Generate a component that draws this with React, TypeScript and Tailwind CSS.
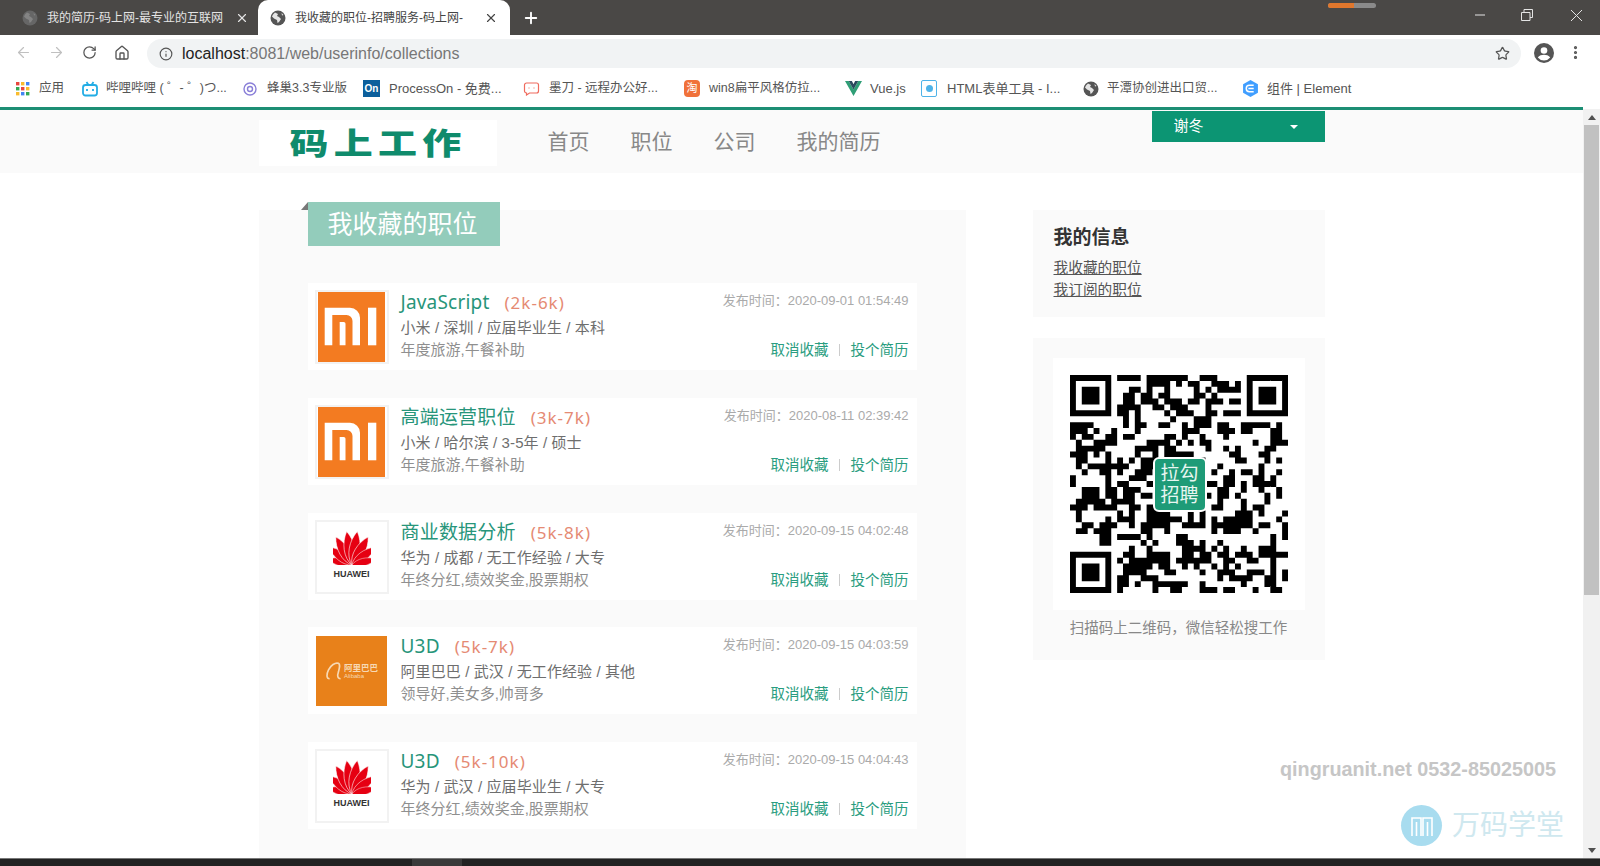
import React from "react";
import { ArrowLeft, ArrowRight, RotateCw, Home, Info, Star, X, Plus, EllipsisVertical } from "lucide-react";

const cjk = "font-['Liberation_Sans','Noto_Sans_CJK_SC',sans-serif]";

function Globe({ className, land = "#fff" }: { className: string; land?: string }) {
  return (
    <svg viewBox="0 0 16 16" className={className}>
      <circle cx="8" cy="8" r="7.5" fill="currentColor" />
      <path d="M5 2.5l3 1.5-1 2 2 1 2 2-2 3-1.5 1-.5-3-3-1.5-2-2 1-2z M11.500 3l2 2-1.500.5z" fill={land} opacity=".85" />
    </svg>
  );
}

function Tab({ title, active }: { title: string; active?: boolean }) {
  return (
    <div className={`flex items-center h-[35px] shrink-0 ${active ? "w-[252px] pl-[12px] pr-[12px] bg-white rounded-t-[10px] text-[#444]" : "w-[250px] pl-[14px] pr-[9px] text-[#e4e4e4]"}`}>
      <Globe className={`w-[16px] h-[16px] shrink-0 ${active ? "text-[#555]" : "text-[#666]"}`} land={active ? "#fff" : "#8a8a8a"} />
      <span className="ml-[9px] flex-1 overflow-hidden whitespace-nowrap text-[12px]">{title}</span>
      <X className="w-[14px] h-[14px] ml-[5px] shrink-0" strokeWidth={2} />
    </div>
  );
}

function Bookmark({ icon, label, cls }: { icon: React.ReactNode; label: string; cls: string }) {
  return (
    <div className={`flex items-center shrink-0 text-[#555] whitespace-nowrap ${cls}`}>
      {icon}
      <span>{label}</span>
    </div>
  );
}

function MiLogo() {
  return (
    <svg viewBox="0 0 67 70" className="w-[67px] h-[70px]">
      <rect width="67" height="70" fill="#f37b21" />
      <path d="M6.700 15.700H32a10 10 0 0 1 10 10V53.300H34.500V29a6 6 0 0 0-6-6H14.300V53.300H6.700z" fill="#fff" />
      <path d="M21.700 30h4a1.800 1.800 0 0 1 1.800 1.800V53.300h-5.800z" fill="#fff" />
      <rect x="50" y="15.700" width="8.300" height="37.600" fill="#fff" />
    </svg>
  );
}

function HuaweiLogo() {
  const petals: [number, number][] = [[-76, 0.72], [-52, 0.85], [-30, 0.95], [-9, 1], [9, 1], [30, 0.95], [52, 0.85], [76, 0.72]];
  return (
    <div className="flex flex-col items-center -mt-[4px]">
      <svg viewBox="0 0 40 36" className="w-[38px] h-[34px]">
        {petals.map(([a, s], i) => (
          <path key={i} d="M20 36C12 27 13 11 20 0C27 11 28 27 20 36z" fill="#e60012" transform={`rotate(${a} 20 36) translate(20 36) scale(${s}) translate(-20 -36)`} stroke="#fff" strokeWidth=".6" />
        ))}
      </svg>
      <span className="font-['Liberation_Sans',sans-serif] font-bold text-[9px] leading-[10px] text-[#333] mt-[4px]">HUAWEI</span>
    </div>
  );
}

function AliLogo() {
  return (
    <div className="w-[71px] h-[70px] bg-[#e8811a] flex items-center justify-center text-[#f7d9b4]">
      <svg viewBox="0 0 16 20" className="w-[18px] h-[22px]" fill="none" stroke="currentColor" strokeWidth="1.500">
        <path d="M4 17C1 17 1 13 3 9c2-4 6-7 9-6 2 1 1 4 0 8-1 3-1 6 2 6" />
      </svg>
      <div className="flex flex-col ml-[1px]">
        <span className="text-[8.5px] leading-[10px] font-bold">阿里巴巴</span>
        <span className="font-['Liberation_Sans',sans-serif] text-[6px] leading-[7px]">Alibaba</span>
      </div>
    </div>
  );
}

type Job = { title: string; salary: string; info: string; welfare: string; time: string; logo: "mi" | "hw" | "ali" };
const jobs: Job[] = [
  { title: "JavaScript", salary: "(2k-6k)", info: "小米 / 深圳 / 应届毕业生 / 本科", welfare: "年度旅游,午餐补助", time: "2020-09-01 01:54:49", logo: "mi" },
  { title: "高端运营职位", salary: "(3k-7k)", info: "小米 / 哈尔滨 / 3-5年 / 硕士", welfare: "年度旅游,午餐补助", time: "2020-08-11 02:39:42", logo: "mi" },
  { title: "商业数据分析", salary: "(5k-8k)", info: "华为 / 成都 / 无工作经验 / 大专", welfare: "年终分红,绩效奖金,股票期权", time: "2020-09-15 04:02:48", logo: "hw" },
  { title: "U3D", salary: "(5k-7k)", info: "阿里巴巴 / 武汉 / 无工作经验 / 其他", welfare: "领导好,美女多,帅哥多", time: "2020-09-15 04:03:59", logo: "ali" },
  { title: "U3D", salary: "(5k-10k)", info: "华为 / 武汉 / 应届毕业生 / 大专", welfare: "年终分红,绩效奖金,股票期权", time: "2020-09-15 04:04:43", logo: "hw" },
];

function JobCard({ job }: { job: Job }) {
  return (
    <div className="flex h-[87px] w-[609px] bg-white pl-[7px] pr-[8px] pt-[7px]">
      <div className={`w-[74px] h-[74px] shrink-0 flex items-center justify-center ${job.logo === "ali" ? "" : "border-2 border-[#f2f2f2]"}`}>
        {job.logo === "mi" && <MiLogo />}
        {job.logo === "hw" && <HuaweiLogo />}
        {job.logo === "ali" && <AliLogo />}
      </div>
      <div className="ml-[12px] flex-1 min-w-0">
        <div className="flex items-start justify-between h-[26px]">
          <div className="flex items-baseline leading-[24px]">
            <span className="text-[19px] tracking-[0.2px] text-[#27957a] font-['Noto_Sans','Noto_Sans_CJK_SC',sans-serif]">{job.title}</span>
            <span className="text-[17px] text-[#e58a73] ml-[15px] tracking-[1px] font-['Noto_Sans',sans-serif]">{job.salary}</span>
          </div>
          <span className="text-[13px] text-[#aaa] leading-[22px]">发布时间：{job.time}</span>
        </div>
        <div className="text-[15px] text-[#6e6e6e] leading-[22px] mt-[1px] whitespace-nowrap tracking-[0.1px]">{job.info}</div>
        <div className="flex items-center justify-between leading-[22px]">
          <span className="text-[15px] text-[#8f8f8f]">{job.welfare}</span>
          <div className="flex items-center text-[14.500px] text-[#2a9d80]">
            <span>取消收藏</span>
            <span className="w-px h-[12px] bg-[#ccc] mx-[10.500px]" />
            <span>投个简历</span>
          </div>
        </div>
      </div>
    </div>
  );
}

function buildQr(): boolean[][] {
  const n = 37;
  let seed = 77123;
  const rnd = () => {
    seed = (seed * 1103515245 + 12345) & 0x7fffffff;
    return (seed >> 12) % 100;
  };
  const m: boolean[][] = [];
  for (let y = 0; y < n; y++) {
    const row: boolean[] = [];
    for (let x = 0; x < n; x++) {
      const prevL = x > 0 ? row[x - 1] : false;
      const prevT = y > 0 ? m[y - 1][x] : false;
      row.push(rnd() < 38 + (prevL ? 9 : 0) + (prevT ? 9 : 0));
    }
    m.push(row);
  }
  const finder = (ox: number, oy: number) => {
    for (let y = -1; y < 8; y++)
      for (let x = -1; x < 8; x++) {
        const X = ox + x, Y = oy + y;
        if (X < 0 || Y < 0 || X >= n || Y >= n) continue;
        const ring = x >= 0 && x <= 6 && y >= 0 && y <= 6 && (x === 0 || x === 6 || y === 0 || y === 6);
        const core = x >= 2 && x <= 4 && y >= 2 && y <= 4;
        m[Y][X] = ring || core;
      }
  };
  finder(0, 0);
  finder(n - 7, 0);
  finder(0, n - 7);
  return m;
}

function Qr() {
  const m = buildQr();
  let d = "";
  m.forEach((r, y) => r.forEach((v, x) => { if (v) d += `M${x} ${y}h1v1h-1z`; }));
  return (
    <div className="relative w-[218px] h-[218px]">
      <svg viewBox="0 0 37 37" className="w-[218px] h-[218px]">
        <path d={d} fill="#000" />
      </svg>
      <div className="absolute left-[83px] top-[82px] w-[54px] h-[55px] rounded-[6px] bg-[#1e9b77] border-2 border-white flex items-center justify-center text-center text-[#e8f6f1] text-[19px] leading-[22px]">
        拉勾<br />招聘
      </div>
    </div>
  );
}

export default function App() {
  return (
    <div className={`w-[1600px] h-[866px] overflow-hidden flex flex-col bg-white ${cjk}`}>
      {/* tab strip */}
      <div className="h-[35px] shrink-0 bg-[#4a4846] flex items-center relative">
        <div className="w-[8px]" />
        <Tab title="我的简历-码上网-最专业的互联网" />
        <Tab title="我收藏的职位-招聘服务-码上网-" active />
        <Plus className="w-[18px] h-[18px] ml-[12px] text-white" strokeWidth={2.500} />
        <div className="flex-1 flex justify-end items-center pr-[18px] pb-[5px] text-[#e4e4e4] gap-[36px]">
          <div className="w-[48px] h-[5px] rounded-full bg-[#8a8a8a] mr-[63px] -mt-[19px] overflow-hidden"><div className="w-[26px] h-[5px] bg-[#e0772d]" /></div>
          <svg viewBox="0 0 10 10" className="w-[10px] h-[10px]" stroke="currentColor" strokeWidth="1"><path d="M0 5h10" /></svg>
          <svg viewBox="0 0 12 12" className="w-[12px] h-[12px] mr-[2px]" fill="none" stroke="currentColor"><path d="M.5 3.500h8.500v8h-8.500z M3 3.500v-3h8.500v8h-2.500" /></svg>
          <svg viewBox="0 0 11 11" className="w-[11px] h-[11px]" stroke="currentColor" strokeWidth="1"><path d="M0 0l11 11M11 0L0 11" /></svg>
        </div>
      </div>
      {/* toolbar */}
      <div className="h-[35px] shrink-0 bg-white flex items-center pl-[15px] pr-[15px]">
        <ArrowLeft className="w-[17px] h-[17px] text-[#c0c0c0]" strokeWidth={1.700} />
        <ArrowRight className="w-[17px] h-[17px] text-[#c0c0c0] ml-[16px]" strokeWidth={1.700} />
        <RotateCw className="w-[15px] h-[15px] text-[#555] ml-[17px]" strokeWidth={2} />
        <Home className="w-[16px] h-[16px] text-[#555] ml-[17px]" strokeWidth={2} />
        <div className="ml-[17px] w-[1374px] h-[29px] mt-[2px] rounded-full bg-[#f1f3f4] flex items-center pl-[12px] pr-[11px]">
          <Info className="w-[14px] h-[14px] text-[#555]" strokeWidth={2} />
          <span className="ml-[9px] text-[16px] text-[#777] font-['Liberation_Sans',sans-serif]"><span className="text-[#222]">localhost</span>:8081/web/userinfo/collections</span>
          <Star className="w-[15px] h-[15px] text-[#555] ml-auto" strokeWidth={2} />
        </div>
        <svg viewBox="0 0 20 20" className="w-[20px] h-[20px] ml-[13px]">
          <circle cx="10" cy="10" r="10" fill="#555" />
          <circle cx="10" cy="7.500" r="3.300" fill="#fff" />
          <path d="M3.800 14.500C5 12.500 8 11.800 10 11.800s5 .7 6.200 2.700A8 8 0 0 1 10 17.500a8 8 0 0 1-6.200-3z" fill="#fff" />
        </svg>
        <EllipsisVertical className="w-[17px] h-[17px] text-[#555] ml-[13px]" strokeWidth={2.500} />
      </div>
      {/* bookmarks */}
      <div className="h-[37px] shrink-0 bg-white flex items-center pl-[16px]">
        <Bookmark cls="w-[66px] gap-[9px] text-[12.500px]" label="应用" icon={
          <svg viewBox="0 0 14 14" className="w-[14px] h-[14px]">
            {[0, 5, 10].map((y, j) => [0, 5, 10].map((x, i) => <rect key={`${i}${j}`} x={x} y={y} width="3.400" height="3.400" fill={["#e8453c", "#f9bb2d", "#4285f4", "#34a853", "#e8453c", "#f9bb2d", "#f9bb2d", "#4285f4", "#34a853"][j * 3 + i]} />))}
          </svg>
        } />
        <Bookmark cls="w-[161px] gap-[8px] text-[12.500px]" label="哔哩哔哩 ( ゜- ゜)つ..." icon={
          <svg viewBox="0 0 16 16" className="w-[16px] h-[16px]" fill="none" stroke="#23ade5" strokeWidth="1.800"><rect x="1" y="4" width="14" height="10.500" rx="2.500" /><path d="M4.500 1l2 3M11.500 1l-2 3" /><path d="M5 8v2M11 8v2" /></svg>
        } />
        <Bookmark cls="w-[120px] gap-[10px] text-[12.500px]" label="蜂巢3.3专业版" icon={
          <svg viewBox="0 0 14 14" className="w-[14px] h-[14px]" fill="none" stroke="#8a7fd8" strokeWidth="1.400"><circle cx="7" cy="7" r="6" /><circle cx="7" cy="7" r="2.500" /></svg>
        } />
        <Bookmark cls="w-[160px] gap-[9px] text-[13px]" label="ProcessOn - 免费..." icon={
          <span className="w-[17px] h-[17px] bg-[#0c5f9c] text-white text-[10px] font-bold leading-[17px] text-center">On</span>
        } />
        <Bookmark cls="w-[161px] gap-[9px] text-[12.500px]" label="墨刀 - 远程办公好..." icon={
          <svg viewBox="0 0 16 14" className="w-[17px] h-[14px]" fill="none" stroke="#ef6b5e" strokeWidth="1.200"><path d="M1 3a2 2 0 0 1 2-2h10a2 2 0 0 1 2 2v6a2 2 0 0 1-2 2H6l-3 2v-2a2 2 0 0 1-2-2z" /><path d="M5 6h1M10 6h1" /></svg>
        } />
        <Bookmark cls="w-[161px] gap-[9px] text-[12.500px]" label="win8扁平风格仿拉..." icon={
          <span className="w-[16px] h-[17px] rounded-[4px] bg-[#f0713a] text-white text-[11px] leading-[17px] text-center">淘</span>
        } />
        <Bookmark cls="w-[76px] gap-[8px] text-[13px]" label="Vue.js" icon={
          <svg viewBox="0 0 16 14" className="w-[17px] h-[15px]"><path d="M0 0h3.500L8 8l4.500-8H16L8 14z" fill="#2f9e76" /><path d="M3.500 0h3L8 3l1.500-3h3L8 8z" fill="#2a4a5e" /></svg>
        } />
        <Bookmark cls="w-[162px] gap-[10px] text-[13px]" label="HTML表单工具 - I..." icon={
          <span className="w-[16px] h-[17px] border border-[#4fb3e8] rounded-[2px] flex items-center justify-center"><span className="w-[7px] h-[7px] rounded-full bg-[#4fb3e8]" /></span>
        } />
        <Bookmark cls="w-[160px] gap-[8px] text-[12.500px]" label="平潭协创进出口贸..." icon={<Globe className="w-[16px] h-[16px] text-[#555]" />} />
        <Bookmark cls="gap-[9px] text-[13px]" label="组件 | Element" icon={
          <svg viewBox="0 0 14 16" className="w-[15px] h-[17px]"><path d="M7 0l7 4v8l-7 4-7-4V4z" fill="#409eff" /><path d="M10 5H6a2 2 0 0 0 0 6h4M5 8h5" fill="none" stroke="#fff" strokeWidth="1.400" /></svg>
        } />
      </div>
      {/* page */}
      <div className="flex-1 min-h-0 flex relative">
        <div className="flex-1 min-w-0 overflow-hidden">
          <div className="h-[3px] bg-[#1c8e74]" />
          <div className="h-[63px] bg-[#fafafa]">
            <div className="w-[1066px] mx-auto flex items-start">
              <div className="w-[238px] h-[46px] mt-[10px] bg-white flex items-center justify-center overflow-hidden text-[#0f8b6c] font-black">
                <span className="inline-block text-[30px] leading-[46px] tracking-[4px] scale-x-130 whitespace-nowrap mt-[2px]">码上工作</span>
              </div>
              <div className="flex ml-[51px] mt-[17px] gap-[41px] text-[21px] leading-[30px] text-[#888]">
                <span>首页</span><span>职位</span><span>公司</span><span>我的简历</span>
              </div>
              <div className="ml-auto mt-[1px] w-[173px] h-[31px] bg-[#0c9573] text-white text-[15px] flex items-center pl-[22px] pr-[27px] justify-between">
                <span>谢冬</span>
                <span className="w-0 h-0 border-x-[4px] border-x-transparent border-t-[4px] border-t-white" />
              </div>
            </div>
          </div>
          <div className="w-[1066px] mx-auto flex items-start justify-between mt-[37px]">
            <div className="w-[707px] h-[700px] bg-[#fafafa] pl-[49px]">
              <div className="relative -mt-[8px] w-[192px] h-[44px] bg-[#93ccbb] text-white text-[25px] leading-[44px] pl-[20px]">
                我收藏的职位
                <span className="absolute -left-[7px] top-0 w-0 h-0 border-l-[7px] border-l-transparent border-b-[8px] border-b-[#777]" />
              </div>
              <div className="mt-[37px] flex flex-col gap-[27.800px]">
                {jobs.map((j, i) => <JobCard key={i} job={j} />)}
              </div>
            </div>
            <div className="w-[292px] flex flex-col gap-[21px]">
              <div className="h-[107px] bg-[#fafafa] pl-[21px] pt-[15px]">
                <div className="text-[19px] font-bold text-[#333] leading-[26px]">我的信息</div>
                <div className="text-[14.700px] text-[#555] underline leading-[22px] mt-[6px]">我收藏的职位</div>
                <div className="text-[14.700px] text-[#555] underline leading-[22px]">我订阅的职位</div>
              </div>
              <div className="h-[322px] bg-[#fafafa] flex flex-col items-center pt-[20px]">
                <div className="w-[252px] h-[252px] bg-white flex items-center justify-center">
                  <Qr />
                </div>
                <div className="text-[14.500px] text-[#888] leading-[22px] mt-[7px]">扫描码上二维码，微信轻松搜工作</div>
              </div>
            </div>
          </div>
        </div>
        {/* scrollbar */}
        <div className="w-[17px] shrink-0 bg-[#f1f1f1] flex flex-col items-center pt-[6px] mt-[2px]">
          <span className="w-0 h-0 border-x-[4px] border-x-transparent border-b-[5px] border-b-[#505050]" />
          <div className="w-[15px] h-[470px] bg-[#c1c1c1] mt-[5px]" />
          <span className="w-0 h-0 border-x-[4px] border-x-transparent border-t-[5px] border-t-[#505050] mt-auto mb-[5px]" />
        </div>
        {/* watermark */}
        <div className="absolute left-[1280px] top-[648px] font-['Liberation_Sans',sans-serif] font-bold text-[19.800px] leading-[28px] text-[#c6c6c6] whitespace-nowrap">qingruanit.net 0532-85025005</div>
        <div className="absolute left-[1401px] top-[698px] flex items-center">
          <div className="w-[41px] h-[41px] rounded-full bg-[#a8dcef] flex items-center justify-center">
            <svg viewBox="0 0 24 20" className="w-[24px] h-[20px]" fill="none" stroke="#fff" strokeWidth="1.600"><path d="M2 20V2h9v18M6.500 20V6M13 20V2h9v18M17.500 20V6" /></svg>
          </div>
          <span className="ml-[10px] text-[28px] leading-[40px] text-[#cfe8ef] whitespace-nowrap">万码学堂</span>
        </div>
      </div>
      {/* bottom bar */}
      <div className="h-[8px] shrink-0 bg-[#222] border-t border-t-[#777] flex overflow-hidden relative">
        <div className="ml-[412px] w-[50px] bg-[#3a3a3a]" />
        <span className="ml-auto mr-[75px] text-[12px] leading-[16px] text-white font-['Liberation_Sans',sans-serif] mt-[4px]">11:34</span>
      </div>
    </div>
  );
}
